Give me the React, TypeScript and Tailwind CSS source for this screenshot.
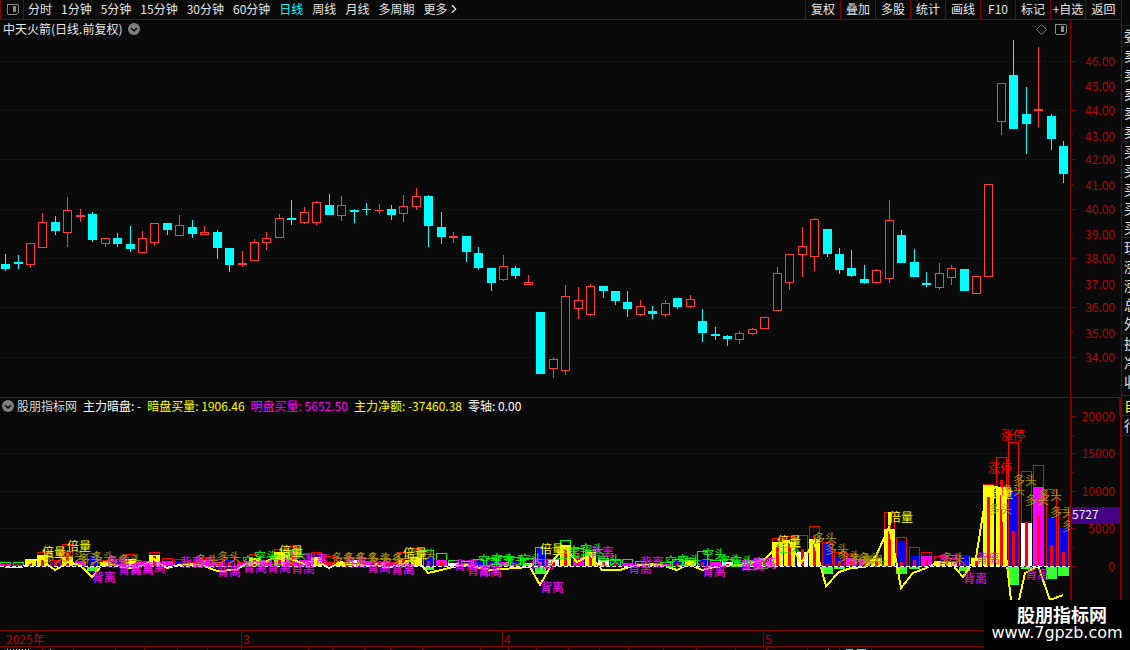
import { ChevronRight } from 'lucide-react'

type Candle = [kind: 'u' | 'd', high: number, top: number, bottom: number, low: number]
type Bar = {
  i: number
  frame: string
  top: number
  fill: string
  fillTop: number
  core?: number
  below?: number
}
type Mark = [x: number, y: number]

const RED = '#ff0000'
const GREEN = '#00ff00'
const BLUE = '#0000ff'
const YELLOW = '#ffff00'
const MAGENTA = '#ff00ff'
const WHITE = '#ffffff'

const periods = [
  '分时',
  '1分钟',
  '5分钟',
  '15分钟',
  '30分钟',
  '60分钟',
  '日线',
  '周线',
  '月线',
  '多周期',
]

const tools = ['复权', '叠加', '多股', '统计', '画线', 'F10', '标记', '+自选', '返回']

const candles: Candle[] = [
  ['d', 254, 264, 269, 271],
  ['d', 255, 262, 264, 269],
  ['u', 243, 243, 265, 268],
  ['u', 213, 222, 248, 248],
  ['d', 216, 222, 231, 235],
  ['u', 197, 210, 233, 247],
  ['u', 209, 215, 217, 222],
  ['d', 212, 214, 240, 242],
  ['u', 238, 238, 244, 247],
  ['d', 233, 238, 244, 247],
  ['d', 226, 244, 249, 252],
  ['u', 231, 238, 253, 253],
  ['u', 223, 223, 243, 246],
  ['d', 223, 223, 230, 235],
  ['u', 215, 225, 236, 236],
  ['d', 220, 227, 234, 238],
  ['u', 226, 232, 235, 235],
  ['d', 230, 232, 248, 259],
  ['d', 248, 248, 265, 272],
  ['u', 251, 263, 265, 267],
  ['u', 239, 242, 261, 261],
  ['u', 232, 238, 243, 250],
  ['u', 214, 218, 238, 238],
  ['d', 200, 218, 220, 225],
  ['u', 207, 212, 223, 224],
  ['u', 201, 202, 223, 225],
  ['d', 194, 205, 215, 215],
  ['u', 196, 205, 216, 221],
  ['d', 209, 210, 212, 223],
  ['d', 203, 209, 210, 215],
  ['u', 204, 210, 211, 214],
  ['d', 205, 209, 215, 220],
  ['u', 195, 206, 214, 222],
  ['u', 188, 196, 207, 210],
  ['d', 195, 196, 226, 247],
  ['d', 212, 227, 237, 244],
  ['u', 232, 236, 238, 243],
  ['d', 236, 236, 252, 262],
  ['d', 247, 253, 268, 270],
  ['d', 268, 268, 283, 291],
  ['u', 255, 266, 280, 281],
  ['d', 266, 268, 276, 279],
  ['u', 275, 282, 285, 285],
  ['d', 312, 312, 374, 374],
  ['u', 357, 359, 369, 378],
  ['u', 285, 296, 371, 375],
  ['u', 287, 300, 309, 319],
  ['u', 284, 286, 315, 316],
  ['d', 286, 286, 291, 298],
  ['d', 291, 291, 301, 305],
  ['d', 291, 302, 309, 317],
  ['u', 300, 306, 315, 316],
  ['d', 306, 311, 314, 319],
  ['u', 300, 303, 315, 317],
  ['d', 298, 298, 307, 309],
  ['u', 295, 299, 307, 308],
  ['d', 309, 321, 333, 342],
  ['d', 327, 334, 336, 340],
  ['d', 335, 336, 339, 346],
  ['u', 331, 333, 340, 344],
  ['u', 328, 329, 334, 335],
  ['u', 317, 317, 329, 329],
  ['u', 267, 273, 311, 311],
  ['u', 254, 254, 283, 290],
  ['u', 227, 246, 255, 277],
  ['u', 218, 219, 257, 271],
  ['d', 229, 229, 254, 257],
  ['d', 248, 254, 270, 274],
  ['d', 250, 268, 276, 277],
  ['d', 265, 279, 283, 284],
  ['u', 269, 270, 283, 284],
  ['u', 200, 220, 279, 283],
  ['d', 230, 235, 263, 263],
  ['d', 249, 262, 277, 277],
  ['d', 272, 283, 285, 287],
  ['u', 263, 273, 288, 290],
  ['u', 265, 268, 278, 285],
  ['d', 269, 269, 291, 291],
  ['u', 276, 276, 294, 294],
  ['u', 184, 184, 277, 277],
  ['u', 83, 83, 122, 135],
  ['d', 40, 75, 129, 129],
  ['d', 87, 114, 124, 154],
  ['u', 47, 109, 111, 127],
  ['d', 114, 116, 139, 150],
  ['d', 141, 146, 174, 183],
]

// frame colour, frame top, fill colour, fill top, core top, depth under zero
const barRows: [string, number, string, number, number?, number?][] = [
  [GREEN, 562, MAGENTA, 564, 564],
  [GREEN, 562, MAGENTA, 565, 564],
  [YELLOW, 559, YELLOW, 560, 562],
  [RED, 552, YELLOW, 555, 560],
  [RED, 560, BLUE, 561, 562],
  [RED, 544, YELLOW, 557, 552],
  [RED, 561, MAGENTA, 562],
  [RED, 553, BLUE, 555, 562, 4],
  [RED, 560, YELLOW, 562],
  [RED, 559, BLUE, 562, 563],
  [RED, 554, YELLOW, 559],
  [RED, 561, MAGENTA, 562, 563],
  [RED, 552, YELLOW, 555, 556],
  [RED, 558, MAGENTA, 561],
  [RED, 559, BLUE, 561, 563],
  [RED, 562, YELLOW, 563],
  [RED, 558, MAGENTA, 560],
  [RED, 559, MAGENTA, 562, 563],
  [RED, 555, BLUE, 560, 562],
  [RED, 562, MAGENTA, 563],
  [RED, 554, YELLOW, 558, 560],
  [RED, 557, MAGENTA, 560],
  [RED, 549, YELLOW, 552, 560],
  [RED, 546, MAGENTA, 551, 553],
  [RED, 553, MAGENTA, 560],
  [RED, 552, YELLOW, 557],
  [RED, 556, RED, 562],
  [RED, 557, YELLOW, 562],
  [RED, 557, WHITE, 560, 563],
  [RED, 558, MAGENTA, 561],
  [RED, 559, YELLOW, 563, 561],
  [RED, 559, RED, 562],
  [RED, 552, YELLOW, 560, 558],
  [RED, 548, YELLOW, 557],
  [GREEN, 550, BLUE, 557, 561, 3],
  [GREEN, 553, MAGENTA, 560, 562],
  [GREEN, 560, WHITE, 563],
  [GREEN, 561, MAGENTA, 563],
  [GREEN, 559, BLUE, 561],
  [GREEN, 558, BLUE, 561, 563],
  [GREEN, 556, MAGENTA, 562],
  [GREEN, 557, BLUE, 562, 563],
  [GREEN, 558, YELLOW, 563],
  [GREEN, 547, BLUE, 548, 562, 7],
  [GREEN, 559, WHITE, 560, 562],
  [GREEN, 540, YELLOW, 545, 547],
  [GREEN, 548, MAGENTA, 557, 554],
  [GREEN, 550, YELLOW, 552, 556],
  [GREEN, 558, WHITE, 560, 562],
  [GREEN, 559, BLUE, 561, 563],
  [GREEN, 559, MAGENTA, 563],
  [GREEN, 561, MAGENTA, 564],
  [GREEN, 563, YELLOW, 564],
  [GREEN, 562, MAGENTA, 564],
  [GREEN, 559, BLUE, 561, 563],
  [GREEN, 558, YELLOW, 560],
  [GREEN, 551, BLUE, 560, 562],
  [GREEN, 560, MAGENTA, 562],
  [GREEN, 559, WHITE, 562, 564],
  [GREEN, 562, MAGENTA, 564],
  [GREEN, 561, MAGENTA, 563],
  [GREEN, 558, YELLOW, 562, 560],
  [RED, 538, YELLOW, 542, 545],
  [RED, 536, YELLOW, 542, 543],
  [RED, 535, WHITE, 552, 549],
  [RED, 526, YELLOW, 539, 535],
  [RED, 542, BLUE, 543, 564, 7],
  [RED, 552, BLUE, 557, 562, 2],
  [RED, 554, MAGENTA, 558, 562],
  [RED, 557, MAGENTA, 559, 563],
  [RED, 555, YELLOW, 558, 561],
  [RED, 512, YELLOW, 529, 525],
  [RED, 537, BLUE, 541, 562, 7],
  [RED, 547, BLUE, 556, 560, 2],
  [RED, 552, MAGENTA, 556, 560],
  [RED, 556, YELLOW, 561],
  [RED, 555, YELLOW, 562],
  [GREEN, 556, BLUE, 555, 564, 4],
  [RED, 557, YELLOW, 558, 561],
  [RED, 484, YELLOW, 485, 497],
  [RED, 457, YELLOW, 487, 480],
  [RED, 442, BLUE, 491, 531, 18],
  [RED, 471, WHITE, 523, 522, 2],
  [RED, 465, MAGENTA, 487, 515],
  [RED, 489, BLUE, 518, 545, 12],
  [RED, 509, BLUE, 528, 552, 9],
]

const bars: Bar[] = barRows.map(([frame, top, fill, fillTop, core, below], i) => ({
  i,
  frame,
  top,
  fill,
  fillTop,
  core,
  below,
}))

const netLine =
  '5,567 22,567 30,563 42,557 48,565 55,570 62,566 67,562 80,565 92,577 98,570 104,562 117,566 130,568 142,566 154,559 160,564 167,568 179,565 192,564 204,566 217,571 236,570 246,564 266,562 279,554 291,559 304,564 316,560 329,568 341,562 354,565 391,567 403,564 416,558 428,573 441,570 453,567 466,565 490,570 503,569 515,568 530,567 540,585 549,569 553,560 565,548 577,562 590,555 602,570 620,570 632,566 652,564 665,566 677,570 689,564 702,570 714,567 740,565 764,560 772,552 777,544 789,541 795,552 801,563 808,552 814,541 819,560 826,586 839,572 851,568 865,567 876,556 889,527 896,560 901,588 913,573 926,568 938,562 951,563 963,577 973,562 976,558 982,520 988,486 1001,488 1006,556 1011,600 1013,618 1019,600 1025,573 1038,566 1050,600 1063,595'

const marks: { text: string; color: string; at: Mark[] }[] = [
  {
    text: '多头',
    color: '#a89a00',
    at: [
      [43, 557], [62, 556], [78, 559], [91, 557], [106, 561], [118, 560], [195, 560], [217, 557],
      [331, 558], [343, 558], [355, 558], [367, 558], [380, 559], [392, 558], [412, 554],
      [813, 538], [825, 549], [837, 556], [849, 559], [858, 558], [862, 561], [941, 558],
      [988, 509], [1001, 490], [1013, 480], [1025, 500], [1038, 495], [1050, 512], [1062, 526],
    ],
  },
  {
    text: '空头',
    color: GREEN,
    at: [
      [242, 561], [254, 556], [270, 559], [282, 554], [478, 560], [491, 559], [503, 560],
      [519, 559], [556, 553], [568, 551], [580, 549], [597, 560], [665, 561], [677, 560],
      [702, 554], [718, 560], [730, 561], [742, 564], [753, 563], [777, 547],
    ],
  },
  {
    text: '背离',
    color: MAGENTA,
    at: [
      [92, 577], [106, 562], [118, 569], [130, 569], [142, 567], [180, 562], [192, 562],
      [217, 571], [243, 567], [267, 567], [291, 568], [304, 559], [343, 562], [367, 567],
      [391, 569], [454, 565], [467, 570], [478, 571], [530, 564], [540, 587], [590, 552],
      [628, 568], [640, 562], [702, 571], [740, 565], [752, 563], [938, 560], [963, 578],
      [976, 558], [1025, 574],
    ],
  },
  {
    text: '倍量',
    color: YELLOW,
    at: [[42, 552], [67, 546], [279, 551], [403, 553], [540, 549], [777, 541], [889, 517], [989, 493]],
  },
  {
    text: '涨停',
    color: RED,
    at: [[988, 468], [1001, 435]],
  },
]

const quoteGroups = [
  { labels: ['委'], color: 'text-[#e0e0e0]' },
  { labels: ['卖', '卖', '卖', '卖', '卖'], color: 'text-[#e0e0e0]' },
  { labels: ['买', '买', '买', '买', '买'], color: 'text-[#e0e0e0]' },
  { labels: ['现', '涨', '涨', '总', '外'], color: 'text-[#e0e0e0]' },
  { labels: ['换', '净', '收'], color: 'pb-1 text-[#e0e0e0]' },
  { labels: ['自'], color: 'text-[#ffff00]' },
  { labels: ['行'], color: 'text-[#e0e0e0]' },
]

const stripTicks = [
  42, 73, 115, 144, 177, 207, 241, 308, 332, 364, 390, 422, 480, 508, 536, 568, 599, 628, 663,
  696, 735, 766, 807, 839, 871,
]

const centerX = (i: number) => Math.floor(5.6 + 12.447 * i)

const PanelIcon = () => (
  <svg width="13" height="12" viewBox="0 0 13 12" shapeRendering="crispEdges" aria-hidden="true">
    <rect x="1" y="1" width="11" height="10" rx="1" fill="none" stroke="#8a8a8a" />
    <rect x="7" y="3" width="3" height="6" fill="#8a8a8a" />
  </svg>
)

const RoundChevron = () => (
  <svg width="12" height="12" viewBox="0 0 12 12" aria-hidden="true">
    <circle cx="6" cy="6" r="6" fill="#808080" />
    <path d="M3 5l3 3 3-3" fill="none" stroke="#0a0a0a" strokeWidth="1.5" />
  </svg>
)

const Toolbar = () => (
  <header className="flex h-5 items-stretch justify-between border-b border-[#800000] text-[#e6e6e6]">
    <div className="flex items-stretch">
      <button
        type="button"
        aria-label="左侧面板"
        className="flex w-6 items-center justify-center border-x border-[#800000] pb-0.5"
      >
        <PanelIcon />
      </button>
      <nav className="flex items-center gap-[9px] pb-0.5 pl-1">
        {periods.map((period) => (
          <button
            type="button"
            key={period}
            className={period === '日线' ? 'text-[#00ffff]' : ''}
          >
            {period}
          </button>
        ))}
        <button type="button" className="flex items-center">
          更多
          <ChevronRight size={14} strokeWidth={2} />
        </button>
      </nav>
    </div>
    <div className="flex items-stretch">
      {tools.map((tool) => (
        <button
          type="button"
          key={tool}
          className="w-[35px] whitespace-nowrap border-l border-[#800000] pb-0.5 text-center last:w-9"
        >
          {tool}
        </button>
      ))}
    </div>
  </header>
)

const PriceChart = () => {
  const labels = [46, 45, 44, 43, 42, 41, 40, 39, 38, 37, 36, 35, 34]
  return (
    <svg
      viewBox="0 40 1121 357"
      className="block w-full overflow-visible"
      role="img"
      aria-label="日线K线图"
    >
      {labels.map((label, n) => {
        const y = Math.floor(61.2 + n * 24.66)
        const major = n % 2 === 0
        return (
          <g key={label}>
            {major && (
              <path d={`M1 ${y}.5H1068`} stroke="#6e0f0f" strokeDasharray="1 3" />
            )}
            <path
              d={`M1071 ${y}.5h${major ? 5 : 2}`}
              stroke="#800000"
              shapeRendering="crispEdges"
            />
            <text x="1115" y={y + (major ? 5 : 6)} textAnchor="end" fill="#b80000">
              {label}.00
            </text>
          </g>
        )
      })}
      <path d="M1070.5 40V397" stroke="#800000" shapeRendering="crispEdges" />
      <g shapeRendering="crispEdges">
        {candles.map(([kind, high, top, bottom, low], i) => {
          const x = centerX(i)
          const color = kind === 'u' ? '#ff3c3c' : '#00ffff'
          return (
            <g key={i} fill={color}>
              <rect x={x} y={high} width="1" height={top - high} />
              <rect x={x} y={bottom} width="1" height={low - bottom} />
              {kind === 'u' && bottom - top > 2 ? (
                <rect
                  x={x - 3.5}
                  y={top + 0.5}
                  width="8"
                  height={bottom - top - 1}
                  fill="none"
                  stroke={color}
                />
              ) : (
                <rect x={x - 4} y={top} width="9" height={bottom - top} />
              )}
            </g>
          )
        })}
      </g>
    </svg>
  )
}

const VolumeChart = () => (
  <svg
    viewBox="0 416 1121 214"
    className="block w-full overflow-visible"
    role="img"
    aria-label="主力暗盘指标图"
  >
    <clipPath id="plot">
      <rect x="0" y="400" width="1070" height="230" />
    </clipPath>
    {[453, 491, 528].map((y) => (
      <path key={y} d={`M1 ${y}.5H1068`} stroke="#6e0f0f" strokeDasharray="1 3" />
    ))}
    {[20000, 15000, 10000, 5000, 0].map((label, n) => {
      const y = Math.floor(416 + n * 37.5)
      return (
        <g key={label}>
          <path
            d={n < 4 ? `M1072 ${y}.5h4M1072 ${y + 19}.5h2` : `M1072 ${y}.5h4`}
            stroke="#800000"
            shapeRendering="crispEdges"
          />
          <text x="1115" y={y + 5} textAnchor="end" fill="#b80000">
            {label}
          </text>
        </g>
      )
    })}
    <g clipPath="url(#plot)" shapeRendering="crispEdges">
      {bars.map((bar) => {
        const x = centerX(bar.i)
        const slim = bar.fill === BLUE
        return (
          <g key={bar.i}>
            <rect
              x={x - 4.5}
              y={bar.top + 0.5}
              width="10"
              height={566 - bar.top}
              fill="none"
              stroke={bar.frame}
            />
            <rect
              x={slim ? x - 3 : x - 5}
              y={bar.fillTop}
              width={slim ? 8 : 11}
              height={566 - bar.fillTop}
              fill={bar.fill}
            />
            {bar.core && (
              <rect x={x - 1} y={bar.core} width="3" height={566 - bar.core} fill={RED} />
            )}
            {bar.below && (
              <rect x={x - 5} y="567" width="11" height={bar.below} fill="#33ff33" />
            )}
          </g>
        )
      })}
      <rect x="888" y="512" width="3" height="13" fill={YELLOW} />
      <polyline points={netLine} fill="none" stroke={YELLOW} strokeWidth="2" />
      <path d="M0 566.5H1070" stroke="#0a0a0a" />
      <path d="M0 566.5H1070" stroke={WHITE} strokeDasharray="4 2" />
    </g>
    <g clipPath="url(#plot)">
      {marks.map((mark) =>
        mark.at.map(([x, y]) => (
          <text key={`${mark.text}${x}-${y}`} x={x} y={y + 5} fill={mark.color}>
            {mark.text}
          </text>
        )),
      )}
    </g>
    <path
      d="M1071 416V630M1120.5 416V630"
      stroke="#800000"
      strokeWidth="2"
      shapeRendering="crispEdges"
    />
    <rect x="1071" y="507" width="49" height="17" fill="#440084" />
    <text x="1072" y="519" fill="#f0f0f0">
      5727
    </text>
  </svg>
)

const Legend = () => (
  <div className="flex h-[18px] items-center gap-1.5 whitespace-nowrap pb-0.5 pl-0.5">
    <button type="button" className="flex items-center gap-[3px] text-[#d8d8d8]">
      <RoundChevron />
      股朋指标网
    </button>
    <span className="text-white">主力暗盘: -</span>
    <span className="text-[#ffff00]">暗盘买量: 1906.46</span>
    <span className="text-[#ff00ff]">明盘买量: 5652.50</span>
    <span className="text-[#ffff00]">主力净额: -37460.38</span>
    <span className="text-white">零轴: 0.00</span>
  </div>
)

const QuoteStrip = () => (
  <aside className="w-[9px] shrink-0 overflow-hidden border-l border-[#800000] pt-[25px]">
    {quoteGroups.map((group, n) => (
      <ul key={n} className={`border-t border-[#800000] pl-0.5 text-sm ${group.color}`}>
        {group.labels.map((label, k) => (
          <li key={k} className="h-[19px] w-4 leading-[19px]">
            {label}
          </li>
        ))}
      </ul>
    ))}
    <div className="border-t border-[#800000]" />
  </aside>
)

const DateAxis = () => (
  <div className="grid h-[17px] grid-cols-[241fr_261fr_261fr_367fr] border-y border-[#800000] leading-[15px] text-[#b80000]">
    <span className="pl-1.5">2025年</span>
    <span className="border-l border-[#800000] pl-px">3</span>
    <span className="border-l border-[#800000] pl-px">4</span>
    <span className="border-l border-[#800000] pl-px">5</span>
  </div>
)

export default function App() {
  return (
    <div className="relative flex min-h-screen flex-col overflow-hidden bg-[#0a0a0a] font-['Noto_Sans_CJK_SC',sans-serif] text-xs">
      <div className="flex">
        <main className="min-w-0 flex-1">
          <Toolbar />
          <section>
            <div className="flex h-5 items-stretch text-[#e6e6e6]">
              <h1 className="flex flex-1 items-center gap-1.5 pb-0.5 pl-[3px]">
                中天火箭(日线.前复权)
                <button type="button" aria-label="切换复权">
                  <RoundChevron />
                </button>
              </h1>
              <div className="flex items-center gap-[7px] pr-[3px] pb-0.5">
                <button type="button" aria-label="标记点">
                  <svg width="11" height="11" viewBox="0 0 11 11" aria-hidden="true">
                    <path d="M5.5 .5l5 5-5 5-5-5z" fill="none" stroke="#777777" />
                  </svg>
                </button>
                <button type="button" aria-label="右侧面板">
                  <PanelIcon />
                </button>
              </div>
              <div className="w-[51px] border-l border-[#800000]" />
            </div>
            <PriceChart />
          </section>
          <section className="border-t border-[#800000]">
            <div className="flex">
              <div className="flex-1">
                <Legend />
              </div>
              <div className="w-[51px] border-x-2 border-[#800000]" />
            </div>
            <VolumeChart />
          </section>
        </main>
        <QuoteStrip />
      </div>
      <DateAxis />
      <svg viewBox="0 0 1130 3" className="block w-full" aria-hidden="true">
        <g shapeRendering="crispEdges">
          <path d={stripTicks.map((x) => `M${x}.5 0v3`).join('')} stroke="#800000" />
          <path d="M7 2.5h24M50 2.5h3M828 2.5h2" stroke="#e6e6e6" strokeDasharray="1 2" />
          <path d="M846 2.5h7M857 2.5h9" stroke="#00ffff" />
        </g>
      </svg>
      <div className="absolute right-0 bottom-0 flex h-[50px] w-[146px] flex-col items-center justify-center bg-black pb-1 text-white">
        <strong className="pl-2.5 text-lg leading-5">股朋指标网</strong>
        <a href="#" className="font-['DejaVu_Sans',sans-serif] text-base leading-[18px]">
          www.7gpzb.com
        </a>
      </div>
    </div>
  )
}
